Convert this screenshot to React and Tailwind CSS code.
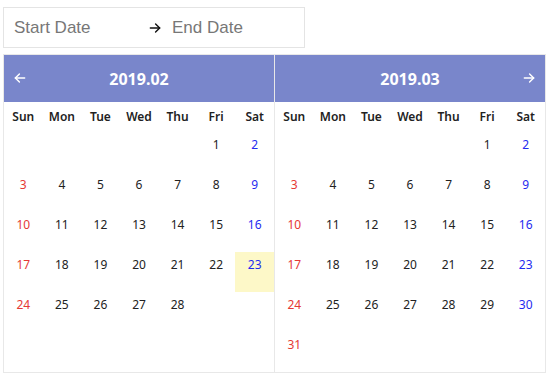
import { useState } from 'react';

const WEEKDAYS = ['Sun', 'Mon', 'Tue', 'Wed', 'Thu', 'Fri', 'Sat'];

// Build 6 weeks of cells for a month (null = empty cell)
function buildCells(year, month) {
  const first = new Date(year, month, 1).getDay();
  const days = new Date(year, month + 1, 0).getDate();
  const cells = [];
  for (let i = 0; i < first; i++) cells.push(null);
  for (let d = 1; d <= days; d++) cells.push(d);
  while (cells.length < 42) cells.push(null);
  return cells;
}

function Arrow({ left }) {
  return (
    <svg width="14" height="14" viewBox="0 0 24 24" fill="none" stroke="currentColor" strokeWidth="2.4" strokeLinecap="round" strokeLinejoin="round">
      {left ? (
        <>
          <path d="M20 12H4" />
          <path d="m11 5-7 7 7 7" />
        </>
      ) : (
        <>
          <path d="M4 12h16" />
          <path d="m13 5 7 7-7 7" />
        </>
      )}
    </svg>
  );
}

function MonthPanel({ year, month, side, selected }) {
  const cells = buildCells(year, month);
  const title = `${year}.${String(month + 1).padStart(2, '0')}`;

  return (
    <div className="w-[270px] flex flex-col">
      {/* ── Header ───────────────────── */}
      <div className="h-[47px] bg-[#7986cb] flex items-center justify-center relative text-white">
        {side === 'left' && (
          <button className="absolute left-[9px] top-[16px]">
            <Arrow left />
          </button>
        )}
        <span className="text-[16px] font-bold">{title}</span>
        {side === 'right' && (
          <button className="absolute right-[9px] top-[16px]">
            <Arrow />
          </button>
        )}
      </div>

      {/* ── Weekdays ─────────────────── */}
      <div className="grid grid-cols-7 h-[30px] items-center">
        {WEEKDAYS.map((w) => (
          <div key={w} className="text-center text-[12px] font-semibold text-[#222]">{w}</div>
        ))}
      </div>

      {/* ── Dates ────────────────────── */}
      <div className="grid grid-cols-7">
        {cells.map((d, i) => {
          const col = i % 7;
          const color = col === 0 ? 'text-[#e53935]' : col === 6 ? 'text-[#1f2bf0]' : 'text-[#222]';
          const hl = d !== null && d === selected;
          return (
            <div
              key={i}
              className={`h-[40px] pt-[4px] text-center text-[12px] ${color} ${hl ? 'bg-[#fdf8c8]' : ''}`}
            >
              {d}
            </div>
          );
        })}
      </div>
    </div>
  );
}

export default function App() {
  const [start, setStart] = useState('');
  const [end, setEnd] = useState('');

  return (
    <div className="pt-[7px] pl-[3px] bg-white min-h-screen" style={{ fontFamily: '"Noto Sans", "Open Sans", sans-serif' }}>
      {/* ── Range input ─────────────────────────── */}
      <div className="w-[302px] h-[41px] border border-[#e4e4e4] flex items-center" style={{ fontFamily: '"Liberation Sans", Arial, sans-serif' }}>
        <input
          autoFocus
          value={start}
          onChange={(e) => setStart(e.target.value)}
          placeholder="Start Date"
          className="w-[134px] ml-[10px] text-[17px] outline-none placeholder:text-[#777] bg-transparent"
        />
        <span className="w-[20px] text-[#111] flex items-center">
          <Arrow />
        </span>
        <input
          value={end}
          onChange={(e) => setEnd(e.target.value)}
          placeholder="End Date"
          className="w-[120px] ml-[4px] text-[17px] outline-none placeholder:text-[#777] bg-transparent"
        />
      </div>

      {/* ── Calendars ───────────────────────────── */}
      <div className="mt-[6px] w-[543px] border border-[#e8e8e8] flex">
        <MonthPanel year={2019} month={1} side="left" selected={23} />
        <div className="w-px bg-[#e8e8e8]" />
        <MonthPanel year={2019} month={2} side="right" />
      </div>
    </div>
  );
}
